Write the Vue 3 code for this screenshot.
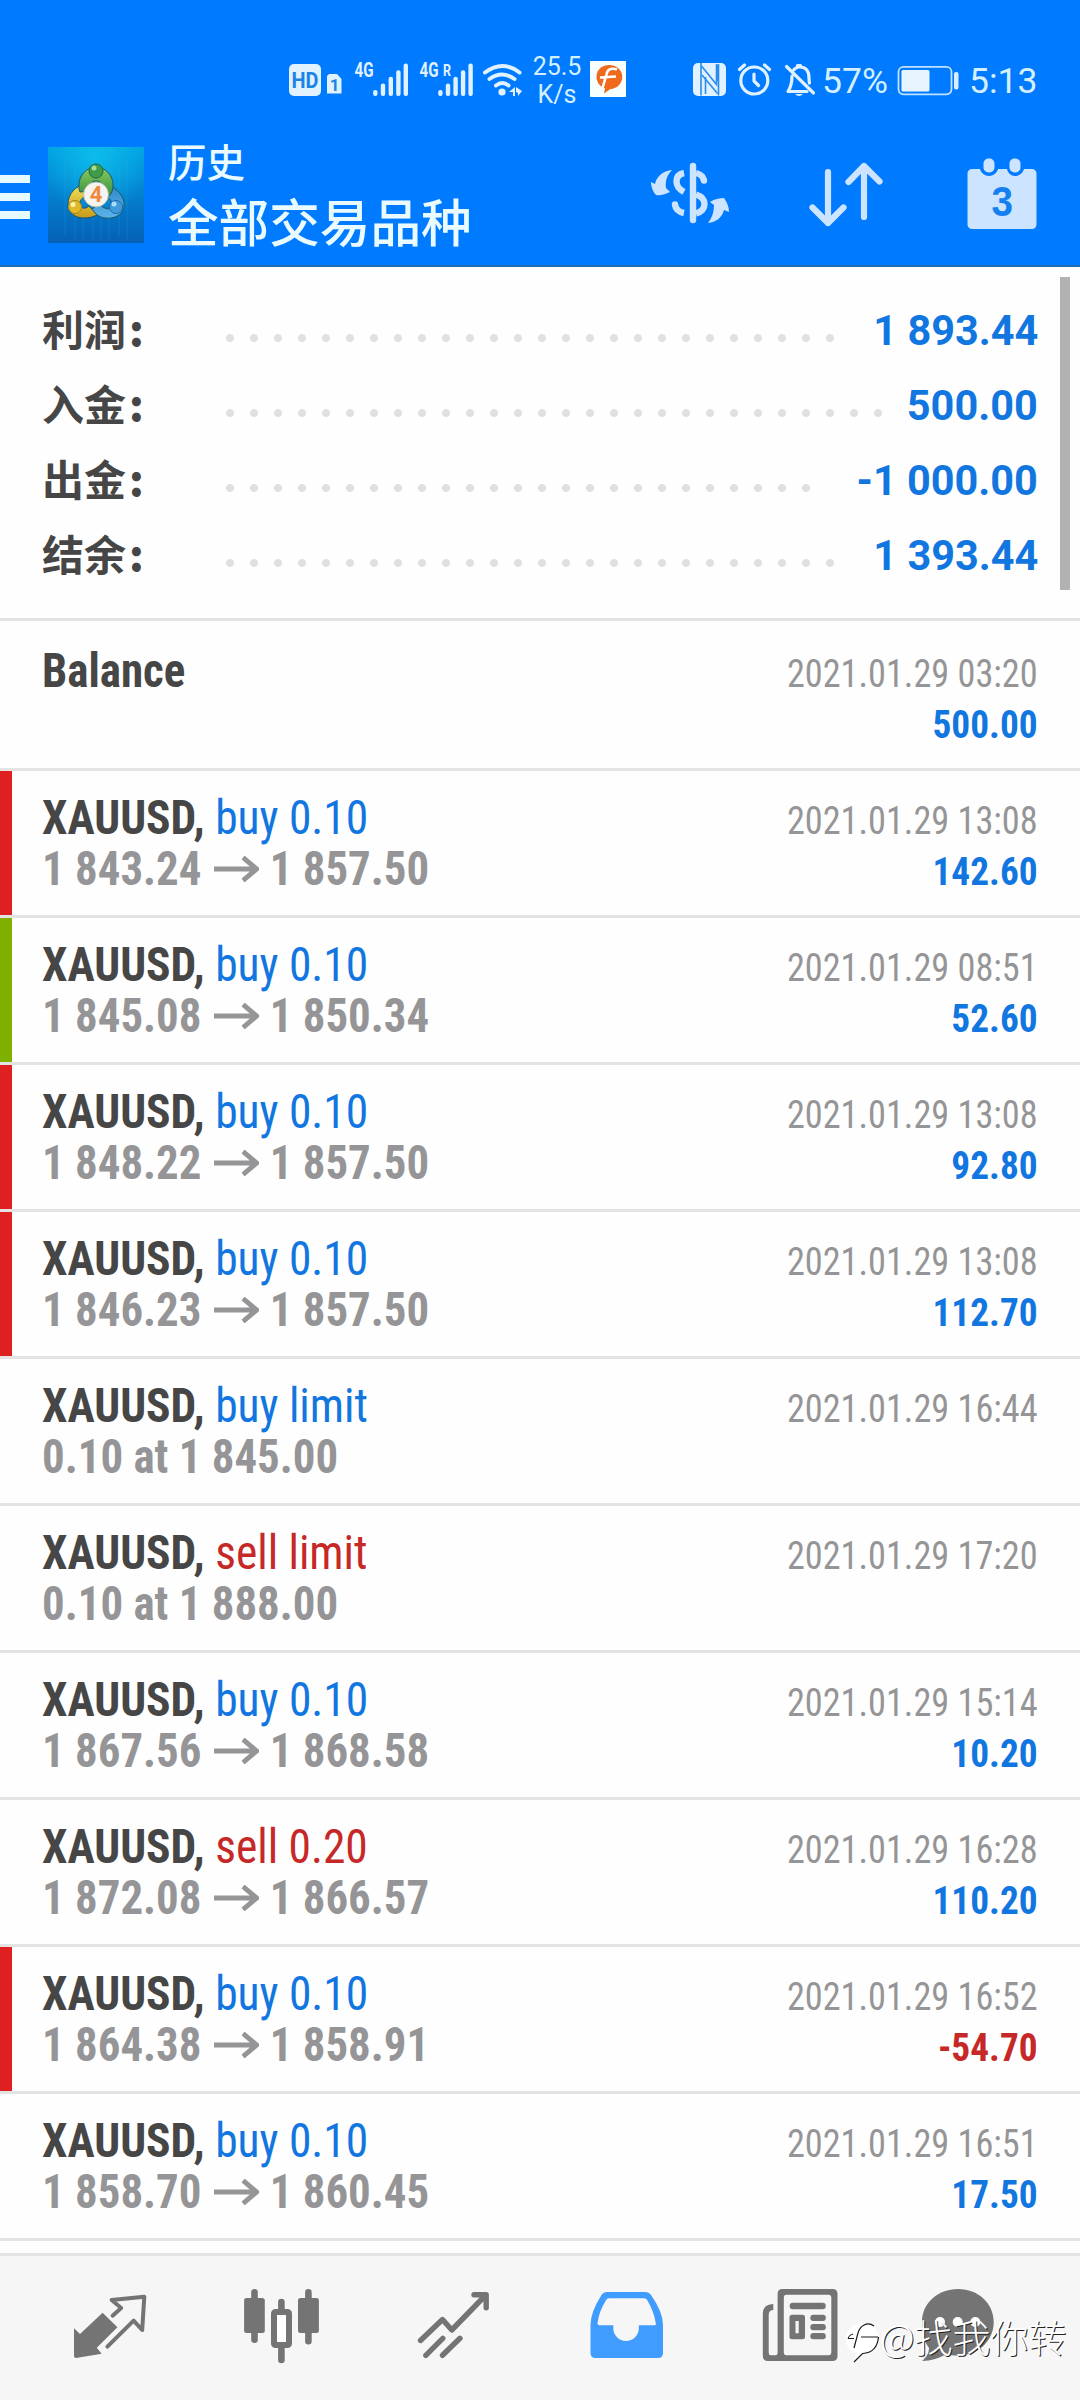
<script setup>
const summary = [
  { label: '利润', value: '1 893.44', dots: 26 },
  { label: '入金', value: '500.00', dots: 28 },
  { label: '出金', value: '-1 000.00', dots: 25 },
  { label: '结余', value: '1 393.44', dots: 26 },
]

const deals = [
  { side: 'buy', action: 'buy 0.10', from: '1 843.24', to: '1 857.50', time: '2021.01.29 13:08', profit: '142.60', mark: 'red' },
  { side: 'buy', action: 'buy 0.10', from: '1 845.08', to: '1 850.34', time: '2021.01.29 08:51', profit: '52.60', mark: 'green' },
  { side: 'buy', action: 'buy 0.10', from: '1 848.22', to: '1 857.50', time: '2021.01.29 13:08', profit: '92.80', mark: 'red' },
  { side: 'buy', action: 'buy 0.10', from: '1 846.23', to: '1 857.50', time: '2021.01.29 13:08', profit: '112.70', mark: 'red' },
  { side: 'buy', action: 'buy limit', note: '0.10 at 1 845.00', time: '2021.01.29 16:44' },
  { side: 'sell', action: 'sell limit', note: '0.10 at 1 888.00', time: '2021.01.29 17:20' },
  { side: 'buy', action: 'buy 0.10', from: '1 867.56', to: '1 868.58', time: '2021.01.29 15:14', profit: '10.20' },
  { side: 'sell', action: 'sell 0.20', from: '1 872.08', to: '1 866.57', time: '2021.01.29 16:28', profit: '110.20' },
  { side: 'buy', action: 'buy 0.10', from: '1 864.38', to: '1 858.91', time: '2021.01.29 16:52', profit: '-54.70', mark: 'red' },
  { side: 'buy', action: 'buy 0.10', from: '1 858.70', to: '1 860.45', time: '2021.01.29 16:51', profit: '17.50' },
]
</script>

<template>
  <div class="screen">
    <header class="header">
      <div class="status">
        <svg class="s-left" width="244" height="48" viewBox="283 56 244 48">
          <g fill="#e0f2ff">
            <rect x="289" y="64" width="32" height="32" rx="5" />
            <path d="M329 74h8l4.500 5v14.500H327V76z" />
            <g v-for="(c, i) in [375.3, 383, 390.8, 398.4, 405.8]" :key="'a' + i">
              <rect :x="c - 2.2" :y="90 - i * 6.6" width="4.4" :height="6 + i * 6.6" rx="2" />
            </g>
            <g v-for="(c, i) in [440.4, 448, 455.6, 463.1, 470.6]" :key="'b' + i">
              <rect :x="c - 2.2" :y="90 - i * 6.6" width="4.4" :height="6 + i * 6.6" rx="2" />
            </g>
            <circle cx="502" cy="92" r="3.6" />
            <path d="M509 92l6-5v9l-2 0v-4zM516 87l6 4-4 5v-3l-2-1z" />
          </g>
          <g fill="none" stroke="#e0f2ff" stroke-width="4" stroke-linecap="round">
            <path d="M485 72.500q17.500-13 34.500 0M489.500 79q12.500-9 25 0M496 85.500q6.500-5 12.500 0" />
          </g>
          <text x="291.500" y="87.500" class="t-hd" textLength="27" lengthAdjust="spacingAndGlyphs">HD</text>
          <text x="329.800" y="91" class="t-one">1</text>
          <text x="354.500" y="77" class="t-net" textLength="19" lengthAdjust="spacingAndGlyphs">4G</text>
          <text x="419.500" y="77" class="t-net" textLength="19" lengthAdjust="spacingAndGlyphs">4G</text>
          <text x="443" y="75.500" class="t-r" textLength="8" lengthAdjust="spacingAndGlyphs">R</text>
        </svg>
        <div class="speed"><span>25.5</span><span>K/s</span></div>
        <svg class="s-app" width="36" height="36" viewBox="0 0 36 36">
          <rect width="36" height="36" fill="#f8ffff" />
          <path d="M19 4a12.500 12 0 0 1 1.500 24L14 32.500l1-5A12 12 0 0 1 19 4z" fill="#f06a1c" />
          <path d="M27 8.500q-9-3-10.500 5L12.500 27M10 16.500l16-1" fill="none" stroke="#fff" stroke-width="2.600" />
        </svg>
        <svg class="s-right" width="126" height="36" viewBox="692 62 126 36">
          <rect x="693" y="63" width="33" height="33" rx="5" fill="#e0f2ff" />
          <path d="M701 63v32.500M717.500 65v16M718.500 64v31.500" fill="none" stroke="#2a8cec" stroke-width="1.600" />
          <path d="M701.500 66l15 18.500V64M702 75l15.500 18.500" fill="none" stroke="#2a8cec" stroke-width="1.600" />
          <path d="M705.500 77v17" stroke="#2a8cec" stroke-width="1.600" />
          <g fill="none" stroke="#e0f2ff" stroke-width="3.200" stroke-linecap="round" stroke-linejoin="round">
            <circle cx="754.300" cy="80.500" r="13.500" />
            <path d="M754 74v7l4.500 4.500M739.500 69.500l5-4.500M764.500 65l5 4.500" />
            <path d="M786.500 66.500l27 26.500M792 76c0 8-1 11-4 15.500h19M794 69.500c2-2 3.500-2.500 5.500-2.500 7 0 9.500 5 9.500 11 0 2 0 3 .500 5M797.500 65.500h3" />
          </g>
          <path d="M795 94h8q-4 4-8 0z" fill="#e0f2ff" />
        </svg>
        <span class="s-text pct">57%</span>
        <svg class="s-bat" width="62" height="32" viewBox="897 65 62 32">
          <rect x="898.500" y="66.800" width="53" height="27.500" rx="5" fill="none" stroke="#bfe2ff" stroke-width="1.800" />
          <rect x="901.500" y="70" width="28" height="21.500" rx="1.500" fill="#e8f5ff" />
          <rect x="954" y="72" width="4.500" height="17.500" rx="2" fill="#d8eeff" />
        </svg>
        <span class="s-text time">5:13</span>
      </div>

      <div class="toolbar">
        <div class="menu"><i /><i /><i /></div>
        <svg class="logo" width="96" height="96" viewBox="0 0 96 96">
          <defs>
            <linearGradient id="bg" x1="0" y1="0" x2="0" y2="1">
              <stop offset="0" stop-color="#00a0e0" />
              <stop offset=".5" stop-color="#047fcf" />
              <stop offset="1" stop-color="#0560b4" />
            </linearGradient>
            <radialGradient id="glow" cx=".5" cy=".1" r=".6">
              <stop offset="0" stop-color="#10c4ee" stop-opacity=".8" />
              <stop offset="1" stop-color="#10c4ee" stop-opacity="0" />
            </radialGradient>
            <linearGradient id="gr" x1="0" y1="0" x2="0" y2="1"><stop offset="0" stop-color="#8ccb5f" /><stop offset="1" stop-color="#2f8a3d" /></linearGradient>
            <linearGradient id="ye" x1="0" y1="0" x2="0" y2="1"><stop offset="0" stop-color="#f3dd55" /><stop offset="1" stop-color="#c79a1c" /></linearGradient>
            <linearGradient id="bl" x1="0" y1="0" x2="0" y2="1"><stop offset="0" stop-color="#2e86c8" /><stop offset="1" stop-color="#5db4ea" /></linearGradient>
          </defs>
          <rect width="96" height="96" fill="url(#bg)" />
          <rect width="96" height="96" fill="url(#glow)" />
          <path d="M17 10v80M27 16v78M35 20v72M45 8v84M53 12v80M61 10v84M71 20v70M79 14v78" stroke="#38b4ec" stroke-opacity=".2" />
          <g stroke="#1b5968" stroke-width="1">
            <path d="M58 38c8 1 16 8 18 17 1 8-4 15-13 16-8 1-14-2-20-8l8-6c4 4 9 6 12 4 3-3 0-9-5-12z" fill="url(#bl)" />
            <path d="M37 38c-9 0-17 9-17 19 0 9 7 14 16 14 5 0 9-1 13-3l-8-9c-3 3-8 3-9-1-1-5 3-8 8-10z" fill="url(#ye)" />
            <path d="M48 20c-9 0-17 8-17 18 0 3 0 5 1 7l9-1c-1-6 2-10 7-10s8 4 8 9l1 9c6-3 8-8 8-14 0-10-8-18-17-18z" fill="url(#gr)" />
          </g>
          <circle cx="48" cy="24" r="7" fill="#419b4b" stroke="#1d6a40" />
          <circle cx="46" cy="21" r="2.500" fill="#a5dd96" />
          <circle cx="27" cy="60" r="6.500" fill="#e0b92b" stroke="#a98520" />
          <circle cx="25" cy="57.500" r="2.500" fill="#fdf3a0" />
          <circle cx="68" cy="60" r="6.500" fill="#409bdc" stroke="#1f68a6" />
          <circle cx="66" cy="57" r="2.500" fill="#abdcfa" />
          <circle cx="48" cy="47.500" r="12.500" fill="#f7f3ef" stroke="#a9bda8" />
          <text x="48" y="55" text-anchor="middle" class="t-four">4</text>
        </svg>
        <div class="titles">
          <span class="sub">历史</span>
          <span class="main">全部交易品种</span>
        </div>
        <svg class="actions" width="400" height="90" viewBox="640 150 400 90">
          <g fill="#cce4ff">
            <path d="M672 170c-8 1-15 5-17 14l-4-2c0 5 2 10 5 13 5 1 9-1 14-3l-4-4c-1-7 1-13 6-18z" />
            <path d="M708 223c8-1 14-5 16-13l5 2c0-5-2-10-5-14-5 0-9 1-14 4l4 3c0 7-2 13-6 18z" />
          </g>
          <g fill="none" stroke="#cce4ff" stroke-width="6.400">
            <path d="M693 166v54" stroke-linecap="round" />
            <path d="M684 173c-5 1-7.500 4-7.500 8.500s3 8 7.500 10.500M684 213c-5-1-8.500-4-9-8.500" />
            <path d="M696 173c4 1 7 3 8 7.500M696 194.500c6 2 8.500 5 8.500 9.500 0 5-3.500 8-8.500 9.500" />
            <path d="M675 204.500v.1M704 180.500v.1" stroke-linecap="round" />
          </g>
          <g fill="none" stroke="#cce4ff" stroke-width="6.200" stroke-linecap="round" stroke-linejoin="round">
            <path d="M828 172v51M812.500 207.500L828 223l15.500-15.500M864 217v-51M848.500 182L864 166l15.500 15.500" />
          </g>
          <path d="M972 169h8c1 4 5 7 9 7s8-3 9-7h9c1 4 4 7 8 7s8-3 9-7h8a4.500 4.500 0 0 1 4.500 4.500v51a4.500 4.500 0 0 1-4.500 4.500h-60a4.500 4.500 0 0 1-4.500-4.500v-51a4.500 4.500 0 0 1 4.500-4.500z" fill="#cce4ff" />
          <rect x="983.500" y="158.500" width="11" height="14" rx="5" fill="#cce4ff" />
          <rect x="1009.500" y="158.500" width="11" height="14" rx="5" fill="#cce4ff" />
          <text x="991.500" y="216.300" class="t-day" textLength="21.500" lengthAdjust="spacingAndGlyphs">3</text>
        </svg>
      </div>
    </header>

    <section class="summary">
      <div v-for="s in summary" :key="s.label" class="sum-row">
        <span class="sum-label">{{ s.label }}<b>:</b></span>
        <span class="dots" :style="{ width: s.dots * 24 + 'px' }" />
        <span class="sum-value">{{ s.value }}</span>
      </div>
      <div class="scrollbar" />
    </section>

    <main>
      <div class="row balance">
        <div class="left"><div class="line1"><b>Balance</b></div></div>
        <div class="right">
          <div class="date">2021.01.29 03:20</div>
          <div class="profit">500.00</div>
        </div>
      </div>
      <div v-for="(d, i) in deals" :key="i" class="row" :class="d.mark">
        <div class="left">
          <div class="line1"><b>XAUUSD,</b> <span :class="d.side">{{ d.action }}</span></div>
          <div v-if="d.note" class="line2">{{ d.note }}</div>
          <div v-else class="line2">
            <span>{{ d.from }}</span>
            <svg class="arrow" width="48" height="26" viewBox="0 0 48 26"><path d="M0 13h45M31 1.500L45.500 13 31 24.500" fill="none" stroke="#959597" stroke-width="5" /></svg>
            <span>{{ d.to }}</span>
          </div>
        </div>
        <div class="right">
          <div class="date">{{ d.time }}</div>
          <div v-if="d.profit" class="profit" :class="{ loss: d.profit[0] === '-' }">{{ d.profit }}</div>
        </div>
      </div>
    </main>

    <nav class="tabs">
      <svg viewBox="0 2256 180 144">
        <path d="M74 2328.300L80 2334l22.600-21.300 14.800 14.600-20.600 20.400 4.800 6-25.600 4.300q-2 0-2-2z" />
        <path class="st" stroke-width="4" d="M112.600 2315.700l8.600-7.700-9.600-8 32.700-3.300-2.100 33.300-8.600-9.300-26.200 26" />
      </svg>
      <svg viewBox="180 2256 180 144">
        <path class="st" stroke-width="6.600" d="M254.500 2292.300v47.500M281.400 2302v10M281.400 2345v15M308.400 2292.300v49" />
        <rect x="244.100" y="2298" width="20.700" height="35" rx="2.500" />
        <rect x="298" y="2298" width="20.900" height="35" rx="2.500" />
        <rect x="274" y="2312" width="15" height="33" rx="1.500" class="hollow" />
      </svg>
      <svg viewBox="360 2256 180 144">
        <path class="st" stroke-width="5.400" d="M420.500 2340.500l22-21 9.300 10.500 34-35M474 2294.700h12.200v13M425.800 2355.300l17-17M442.500 2355.300l17.500-17" />
      </svg>
      <svg viewBox="540 2256 180 144">
        <path fill="#409cff" fill-rule="evenodd" d="M607 2292h38q4 0 6 3 12 17 12 30v28q0 5-5 5h-62.500q-5 0-5-5v-28q0-13 11-30 2-3 5.500-3zM609 2298.300q-2 0-3 2-7 11-8.500 23 0 2 2 2h13.800v3a12.700 12.700 0 0 0 25.500 0v-3h15q2.500 0 2-2-2-12-8.500-23-1-2-3.300-2z" />
      </svg>
      <svg viewBox="720 2256 180 144">
        <path fill-rule="evenodd" d="M782.500 2289h50q5 0 5 5v62q0 5-5 5h-64.500q-5.200 0-5.200-5.500V2314q0-10 10.500-10v6q-4.600 0-4.600 5v38q0 2.300 2.300 2.300h4.300q2.300 0 2.300-2.300V2294q0-5 4.900-5zM786.500 2294.700q-2.700 0-2.700 3v54.600q0 3 2.700 3h42q2.800 0 2.800-3v-54.600q0-3-2.800-3z" />
        <rect x="789.700" y="2302.700" width="36" height="6.500" rx="3" />
        <path fill-rule="evenodd" d="M792 2314.700h10.500q2.500 0 2.500 2.500v19.600q0 2.500-2.500 2.500H792q-2.500 0-2.500-2.500v-19.600q0-2.500 2.500-2.500zM795.500 2321v12.300h3.200V2321z" />
        <rect x="810.300" y="2314.700" width="15.500" height="6.300" rx="3" />
        <rect x="810.300" y="2323.900" width="15.500" height="6.300" rx="3" />
        <rect x="810.300" y="2333" width="15.500" height="6.300" rx="3" />
      </svg>
      <svg viewBox="900 2256 180 144">
        <path d="M958 2289c20 0 35.700 14 35.700 33s-15.700 33.500-35.700 33.500c-5 0-8-.5-12-1.500-6 4-15 7-24 7 5-4 7-9 7-13-4.500-6-7-15-7-26 0-19 16-33 36-33z" />
        <g fill="#fff"><circle cx="940" cy="2322" r="5" /><circle cx="957.700" cy="2322" r="5" /><circle cx="975.300" cy="2322" r="5" /></g>
      </svg>
      <div class="mark">
        <svg width="38" height="44" viewBox="0 0 38 44">
          <path d="M18 3a15 15 0 0 1 1 30L9 41l2-8C4 31 1 26 1 18S8 3 18 3z" fill="#fff" />
          <path d="M29 6c-7-5-14 0-16 7l-4 15M3 18.500h6M16 17h17M33.500 17c-1 10-6 16-16 16.500L9 42" fill="none" stroke="#1a1a1a" stroke-width="1.200" />
          <path d="M3 18.500q1-4 5-4.500" fill="none" stroke="#1a1a1a" stroke-width="1" />
        </svg>
        <span>@找我你转</span>
      </div>
    </nav>
  </div>
</template>

<style>
body { margin: 0; background: #fff; }
</style>

<style scoped>
.screen { width: 1080px; height: 2400px; display: flex; flex-direction: column; overflow: hidden; background: #fefefe; font-family: Roboto, "Noto Sans CJK SC", sans-serif; }
.screen svg { display: block; flex: none; }

.header { height: 267px; box-sizing: border-box; background: #007aff; border-bottom: 2px solid #1b6cbb; flex: none; }
.status { height: 104px; box-sizing: border-box; padding: 56px 0 0 283px; display: flex; align-items: flex-start; color: #d4f0ff; }
.t-hd { font: 700 22px Roboto, sans-serif; fill: #1c83e8; }
.t-one { font: 700 17px Roboto, sans-serif; fill: #1c83e8; }
.t-net { font: 700 20px Roboto, sans-serif; fill: #e0f2ff; }
.t-r { font: 700 16px Roboto, sans-serif; fill: #e0f2ff; }
.speed { width: 60px; display: flex; flex-direction: column; align-items: center; font-size: 25px; line-height: 28px; margin-top: -3px; }
.s-app { margin: 5px 0 0 3px; }
.s-right { margin: 6px 0 0 66px; }
.s-text { font-size: 35.5px; line-height: 40px; margin-top: 5px; white-space: nowrap; }
.pct { width: 75px; margin-left: 4px; }
.s-bat { margin-top: 9px; }
.time { margin-left: 10px; }

.toolbar { height: 161px; display: flex; align-items: flex-start; }
.menu { width: 30px; display: flex; flex-direction: column; gap: 10px; padding-top: 71px; }
.menu i { height: 8px; background: #e6fbff; }
.logo { margin: 43px 0 0 18px; }
.t-four { font: 700 22px Roboto, sans-serif; fill: #ef8a3c; }
.titles { width: 440px; margin: 31px 0 0 24px; display: flex; flex-direction: column; color: #e9fbff; font-family: "Noto Sans CJK SC", sans-serif; font-weight: 500; }
.sub { font-size: 38.5px; line-height: 50px; }
.main { font-size: 50.6px; line-height: 71px; }
.actions { margin: 46px 0 0 32px; }
.t-day { font: 700 43px "Liberation Sans", sans-serif; fill: #1480f0; }

.summary { position: relative; height: 351px; box-sizing: border-box; padding: 27px 42px 0; flex: none; }
.sum-row { height: 75px; display: flex; align-items: flex-start; font-size: 42px; line-height: 73px; font-weight: 700; }
.sum-label { width: 176px; color: #464646; font-family: "Noto Sans CJK SC", sans-serif; line-height: 67px; }
.sum-label b { margin-left: 3px; }
.dots { height: 8px; margin-top: 40px; background: radial-gradient(circle at 12px 4px, #e0e0e0 3.6px, transparent 4.400px) 0 0 / 24px 8px repeat-x; }
.sum-value { margin-left: auto; color: #1276e0; transform: scaleX(.986); transform-origin: right; }
.scrollbar { position: absolute; left: 1060px; top: 10px; width: 10px; height: 313px; background: #b2b2b2; }

.row { height: 147px; box-sizing: border-box; padding: 21px 42px 0; border-top: 3px solid #e3e3e3; display: flex; justify-content: space-between; position: relative; font-stretch: 75%; }
.row.balance { height: 150px; padding-top: 24px; }
.row.red::before, .row.green::before { content: ""; position: absolute; left: 0; top: 0; width: 12px; height: 144px; background: #df2020; }
.row.green::before { background: #7fb000; }
main { border-bottom: 3px solid #e3e3e3; flex: none; }
.left, .right { font-family: "Roboto Condensed", Roboto, sans-serif; white-space: nowrap; }
.line1, .line2 { font-size: 48px; line-height: 51px; height: 51px; transform-origin: left; }
.line1 { transform: scaleX(.947); }
.balance .line1 { transform: scaleX(.937); }
.line1 b { color: #464646; }
.buy { color: #1276e0; }
.sell { color: #c62828; }
.line2 { color: #959597; font-weight: 700; display: flex; align-items: center; transform: scaleX(.935); }
.arrow { margin: 0 12px 0 13px; }
.right { text-align: right; padding-top: 4px; font-size: 39px; line-height: 51px; }
.date { color: #959597; transform: scaleX(.93); transform-origin: right; }
.profit { color: #1276e0; font-weight: 700; transform: scaleX(.957); transform-origin: right; }
.profit.loss { color: #c62828; }

.tabs { position: relative; margin-top: auto; height: 147px; box-sizing: border-box; border-top: 3px solid #e3e3e3; background: #f6f6f6; display: flex; flex: none; }
.tabs > svg { width: 180px; height: 144px; fill: #747474; }
.st { fill: none; stroke: #747474; stroke-linecap: round; stroke-linejoin: round; }
.hollow { fill: #fff; stroke: #747474; stroke-width: 6px; }
.mark { position: absolute; left: 845px; top: 64px; display: flex; align-items: flex-start; color: #fff; font-family: "Noto Sans CJK SC", sans-serif; font-size: 38px; line-height: 40px; white-space: nowrap; text-shadow: 1px 1px 0 #222; }
.mark span { margin: -4px 0 0 -3px; font-weight: 300; }
</style>
